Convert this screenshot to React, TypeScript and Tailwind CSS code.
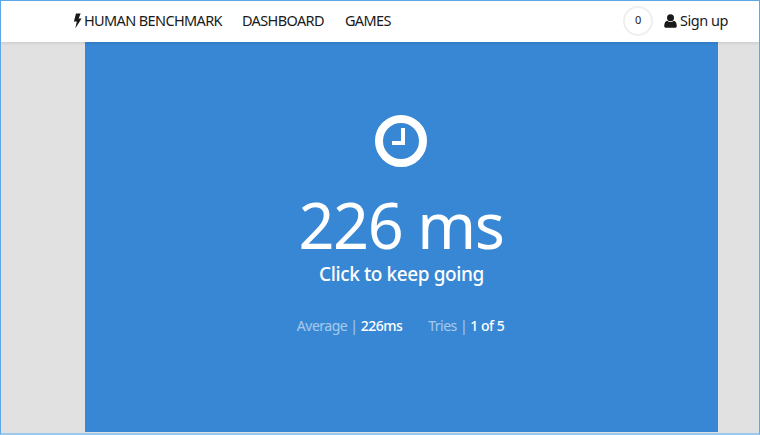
import React from "react";

const Bolt = () => (
  <svg width="9" height="16" viewBox="0 0 9 16" className="mr-[2px]">
    <path d="M3 0.5 H7.6 L5.7 5.6 H8.6 L2.3 15.6 L3.8 8.4 H0.9 Z" fill="#1a1a1a" />
  </svg>
);

const User = () => (
  <svg width="13" height="14" viewBox="0 0 13 14" className="mr-[3px]">
    <circle cx="6.5" cy="3.8" r="3.5" fill="#1a1a1a" />
    <path d="M0.2 12 C0.2 9 1.6 7 3.2 6.8 C4.2 7.6 5.3 8 6.5 8 C7.7 8 8.8 7.6 9.8 6.8 C11.4 7 12.8 9 12.8 12 C12.8 13.2 12 13.8 11 13.8 H2 C1 13.8 0.2 13.2 0.2 12 Z" fill="#1a1a1a" />
  </svg>
);

const Clock = () => (
  <svg width="52" height="52" viewBox="0 0 52 52" className="mr-[2px]">
    <circle cx="26" cy="26" r="22" fill="none" stroke="white" strokeWidth="8" />
    <path d="M28 13 V28 H17" fill="none" stroke="white" strokeWidth="4" />
  </svg>
);

export default function App() {
  return (
    <div className="w-[760px] h-[435px] overflow-hidden flex flex-col bg-[#e1e1e1] border border-[#5ba7e8] border-b-2 border-b-[#9cc8ec] font-['Noto_Sans',sans-serif]">
      <header className="relative z-10 h-[41px] shrink-0 bg-white flex items-center justify-between pl-[72px] pr-[31px] pb-[2px] text-[#1a1a1a] text-[14.5px] tracking-[-0.63px] shadow-[0_1px_3px_rgba(0,0,0,0.12)]">
        <nav className="flex items-center">
          <a className="flex items-center mr-[20px]"><Bolt />HUMAN BENCHMARK</a>
          <a className="mr-[21px]">DASHBOARD</a>
          <a>GAMES</a>
        </nav>
        <div className="flex items-center">
          <div className="w-[30px] h-[30px] rounded-full border-2 border-[#efefef] flex items-center justify-center text-[11px] mr-[11px]">0</div>
          <a className="flex items-center tracking-[-0.45px]"><User />Sign up</a>
        </div>
      </header>
      <main className="flex-1 flex pb-[1px] pl-[84px]">
        <section className="w-[633px] bg-[#3787d4] text-white flex flex-col items-center pt-[73px]">
          <Clock />
          <h1 className="text-[63px] leading-[70px] mt-[23px] mr-[1px] font-normal tracking-[-1.4px]">226 ms</h1>
          <p className="text-[19px] leading-[28px] font-medium tracking-[-0.4px]">Click to keep going</p>
          <div className="flex text-[14px] leading-[22px] mt-[27px] mr-[2px] tracking-[-0.5px]">
            <span className="mr-[26px]"><span className="text-white/55">Average | </span><span className="font-medium">226ms</span></span>
            <span><span className="text-white/55">Tries | </span><span className="font-medium">1 of 5</span></span>
          </div>
        </section>
      </main>
    </div>
  );
}
